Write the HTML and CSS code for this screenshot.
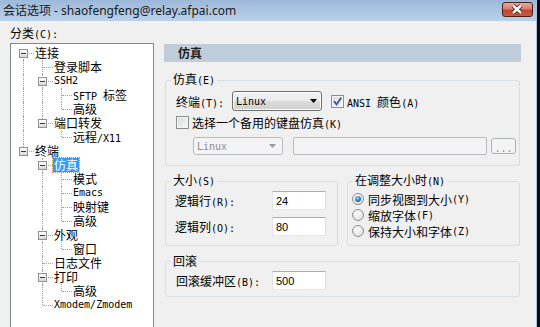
FILE: index.html
```html
<!DOCTYPE html>
<html lang="zh-CN">
<head>
    <meta charset="UTF-8">
    <title>会话选项</title>
    <link rel="stylesheet" href="styles.css">
</head>
<body>
<div class="screen">
  <div class="dialog">
    <div class="titlebar">
      <span class="title">会话选项 - shaofengfeng@relay.afpai.com</span>
      <button class="close">
        <svg width="29" height="13" viewBox="0 0 29 13">
          <path d="M10 2.5l8 7.5M18 2.5l-8 7.5" stroke="#3b1713" stroke-width="4.2" fill="none"/>
          <path d="M10 2.5l8 7.5M18 2.5l-8 7.5" stroke="#fff" stroke-width="2.4" fill="none"/>
        </svg>
      </button>
    </div>

    <div class="main">
      <!-- Kategorien -->
      <div class="side">
        <div class="cap">分类<span class="k">(C):</span></div>
        <div class="tree">
          <div class="node"><i class="c f"><b class="box"></b></i><span class="lbl">连接</span></div>
          <div class="node"><i class="c v"></i><i class="c t"></i><span class="lbl">登录脚本</span></div>
          <div class="node"><i class="c v"></i><i class="c t"><b class="box"></b></i><span class="lbl k">SSH2</span></div>
          <div class="node"><i class="c v"></i><i class="c v"></i><i class="c t"></i><span class="lbl"><span class="k">SFTP </span>标签</span></div>
          <div class="node"><i class="c v"></i><i class="c v"></i><i class="c l"></i><span class="lbl">高级</span></div>
          <div class="node"><i class="c v"></i><i class="c l"><b class="box"></b></i><span class="lbl">端口转发</span></div>
          <div class="node"><i class="c v"></i><i class="c"></i><i class="c l"></i><span class="lbl">远程<span class="k">/X11</span></span></div>
          <div class="node"><i class="c l"><b class="box"></b></i><span class="lbl">终端</span></div>
          <div class="node"><i class="c"></i><i class="c t"><b class="box"></b></i><span class="lbl sel">仿真</span></div>
          <div class="node"><i class="c"></i><i class="c v"></i><i class="c t"></i><span class="lbl">模式</span></div>
          <div class="node"><i class="c"></i><i class="c v"></i><i class="c t"></i><span class="lbl k">Emacs</span></div>
          <div class="node"><i class="c"></i><i class="c v"></i><i class="c t"></i><span class="lbl">映射键</span></div>
          <div class="node"><i class="c"></i><i class="c v"></i><i class="c l"></i><span class="lbl">高级</span></div>
          <div class="node"><i class="c"></i><i class="c t"><b class="box"></b></i><span class="lbl">外观</span></div>
          <div class="node"><i class="c"></i><i class="c v"></i><i class="c l"></i><span class="lbl">窗口</span></div>
          <div class="node"><i class="c"></i><i class="c t"></i><span class="lbl">日志文件</span></div>
          <div class="node"><i class="c"></i><i class="c t"><b class="box"></b></i><span class="lbl">打印</span></div>
          <div class="node"><i class="c"></i><i class="c v"></i><i class="c l"></i><span class="lbl">高级</span></div>
          <div class="node"><i class="c"></i><i class="c l"></i><span class="lbl k">Xmodem/Zmodem</span></div>
        </div>
      </div>

      <!-- Seite: Emulation -->
      <div class="panel">
        <div class="head">仿真</div>

        <fieldset class="grp g-emu">
          <legend>仿真<span class="k">(E)</span></legend>
          <div class="in">
            <div class="line r1">
              <span class="lab w-term">终端<span class="k">(T):</span></span>
              <div class="combo"><span class="k">Linux</span><svg class="arr" width="7" height="4"><path d="M0 0h7L3.5 4z"/></svg></div>
              <span class="chk on"><svg width="11" height="11" viewBox="0 0 11 11"><path d="M2 5.2l2.6 3.3L9.2 1.6"/></svg></span>
              <span class="ctext"><span class="k">ANSI </span>颜色<span class="k">(A)</span></span>
            </div>
            <div class="line r2">
              <span class="chk"></span>
              <span class="ctext">选择一个备用的键盘仿真<span class="k">(K)</span></span>
            </div>
            <div class="line r3">
              <div class="combo off"><span class="k">Linux</span><svg class="arr" width="7" height="4"><path d="M0 0h7L3.5 4z"/></svg></div>
              <div class="field off"></div>
              <div class="dots"><span class="k">...</span></div>
            </div>
          </div>
        </fieldset>

        <div class="pair">
          <fieldset class="grp g-size">
            <legend>大小<span class="k">(S)</span></legend>
            <div class="in">
              <div class="line r-in">
                <span class="lab w-size">逻辑行<span class="k">(R):</span></span>
                <input class="num" type="text" value="24">
              </div>
              <div class="line r-in gap">
                <span class="lab w-size">逻辑列<span class="k">(O):</span></span>
                <input class="num" type="text" value="80">
              </div>
            </div>
          </fieldset>
          <fieldset class="grp g-resize">
            <legend>在调整大小时<span class="k">(N)</span></legend>
            <div class="in">
              <div class="opt"><span class="rad on"></span>同步视图到大小<span class="k">(Y)</span></div>
              <div class="opt"><span class="rad"></span>缩放字体<span class="k">(F)</span></div>
              <div class="opt"><span class="rad"></span>保持大小和字体<span class="k">(Z)</span></div>
            </div>
          </fieldset>
        </div>

        <fieldset class="grp g-scroll">
          <legend>回滚</legend>
          <div class="in">
            <div class="line r-in">
              <span class="lab w-scroll">回滚缓冲区<span class="k">(B):</span></span>
              <input class="num" type="text" value="500">
            </div>
          </div>
        </fieldset>
      </div>
    </div>
  </div>
  <div class="edge"></div>
</div>
</body>
</html>
```

FILE: styles.css
```css
body {
  margin: 0;
  background: #000;
  font-family: "Noto Sans CJK SC", sans-serif;
  font-size: 12px;
  color: #000;
}
.screen {
  display: flex;
  width: 540px;
  height: 327px;
  overflow: hidden;
}
.dialog {
  width: 536px;
  background: #f0f0f0;
  display: flex;
  flex-direction: column;
}
.edge {
  width: 3px;
  border-left: 1px solid #a9c4e2;
  background: #060b14;
}
.k {
  font-family: "DejaVu Sans Mono", monospace;
  font-size: 10px;
}

/* Titelleiste */
.titlebar {
  height: 21px;
  flex: none;
  display: flex;
  justify-content: space-between;
  align-items: flex-start;
  background: linear-gradient(#9db9d9, #bad1ea);
}
.title {
  padding-left: 3px;
  line-height: 21px;
  font-family: "Noto Sans", "Noto Sans CJK SC", sans-serif;
  font-size: 12px;
  color: #1b1b1b;
}
.close {
  margin: 2px 3px 0 0;
  width: 31px;
  height: 15px;
  padding: 0;
  border: 1px solid #4a211b;
  border-radius: 3px;
  background: linear-gradient(#e9ab9c, #d78070 45%, #c2442f 55%, #cc5a42);
  display: flex;
}
.close svg { display: block; }

.main {
  flex: 1;
  display: flex;
  min-height: 0;
}

/* Baum links */
.side {
  width: 144px;
  margin-left: 10px;
  padding-top: 5px;
  display: flex;
  flex-direction: column;
}
.cap {
  height: 14px;
  line-height: 14px;
}
.tree {
  flex: 1;
  margin-top: 3px;
  background: #fff;
  border: 1px solid #828790;
  border-bottom: none;
  padding: 2px 0 0 3px;
}
.node {
  display: flex;
  height: 14px;
  line-height: 14px;
}
.c {
  position: relative;
  width: 19px;
  height: 14px;
  flex: none;
}
.v::before, .t::before, .l::before, .f::before {
  content: "";
  position: absolute;
  left: 9px;
  top: 0;
  bottom: 0;
  border-left: 1px dotted #a0a0a0;
}
.l::before { bottom: 7px; }
.f::before { top: 7px; }
.t::after, .l::after, .f::after {
  content: "";
  position: absolute;
  left: 10px;
  right: -1px;
  top: 7px;
  border-top: 1px dotted #a0a0a0;
}
.box {
  position: absolute;
  left: 5px;
  top: 3px;
  width: 9px;
  height: 9px;
  box-sizing: border-box;
  border: 1px solid #919191;
  background: linear-gradient(#fff, #d8d8d8);
  z-index: 1;
}
.box::after {
  content: "";
  position: absolute;
  left: 1px;
  top: 3px;
  width: 5px;
  height: 1px;
  background: #1f3d77;
}
.lbl {
  margin-left: 1px;
  padding: 0 1px;
  white-space: nowrap;
}
.lbl.k { font-size: 10px; }
.sel {
  background: #3399ff;
  color: #fff;
  outline: 1px dotted #d88a3c;
}

/* Seite rechts */
.panel {
  width: 357px;
  margin-left: 10px;
  padding-top: 23px;
}
.head {
  height: 18px;
  line-height: 18px;
  padding-left: 14px;
  background: #c0cedb;
  font-weight: bold;
  color: #222;
}
.grp {
  box-sizing: border-box;
  margin: 0 0 0 1px;
  padding: 0;
  min-width: 0;
  border: 1px solid #d5dfe5;
  border-radius: 3px;
}
.grp legend {
  margin-left: 5px;
  padding: 0 2px;
  line-height: 14px;
}
.g-emu { width: 355px; margin-top: 10px; }
.g-emu .in { padding: 3px 0 10px 10px; }
.pair {
  display: flex;
  gap: 9px;
  width: 355px;
  margin: 7px 0 0 1px;
}
.pair .grp { width: 173px; margin: 0; }
.g-size .in { padding: 2px 0 9px 9px; }
.g-resize .in { padding: 2px 0 6px 4px; }
.g-scroll { width: 355px; margin-top: 8px; }
.g-scroll .in { padding: 3px 0 6px 10px; }

.line {
  display: flex;
  align-items: center;
  white-space: nowrap;
}
.r1 { height: 20px; }
.r2 { height: 16px; margin-top: 3px; }
.r3 { height: 18px; margin-top: 7px; padding-left: 17px; }
.r-in { height: 19px; }
.r-in.gap { margin-top: 7px; }
.lab { flex: none; }
.w-term { width: 56px; }
.w-size { width: 97px; }
.w-scroll { width: 96px; }

.combo {
  box-sizing: border-box;
  width: 90px;
  height: 20px;
  display: flex;
  align-items: center;
  justify-content: space-between;
  padding: 0 4px 0 3px;
  border: 1px solid #707070;
  border-radius: 3px;
  background: linear-gradient(#f3f3f3, #ebebeb 50%, #dddddd 50%, #cfcfcf);
  box-shadow: inset 0 0 0 1px #fbfbfb;
}
.combo .arr { fill: #000; }
.combo.off {
  height: 18px;
  padding-right: 6px;
  border-color: #b8bcc0;
  background: #f4f4f4;
  box-shadow: none;
  color: #8d8d8d;
}
.combo.off .arr { fill: #9a9a9a; }
.field {
  box-sizing: border-box;
  width: 194px;
  height: 18px;
  margin-left: 10px;
  border: 1px solid #b8bcc0;
  border-radius: 2px;
  background: #f4f4f4;
}
.dots {
  box-sizing: border-box;
  width: 25px;
  height: 16px;
  margin-left: 4px;
  border: 1px solid #adb2b5;
  border-radius: 3px;
  background: #f4f4f4;
  color: #8d8d8d;
  text-align: center;
  line-height: 16px;
}

.chk {
  box-sizing: border-box;
  flex: none;
  width: 13px;
  height: 13px;
  border: 1px solid #8e8f8f;
  background: linear-gradient(135deg, #d6d8da, #fbfbfb);
  box-shadow: inset 0 0 0 1px #f6f6f6;
}
.r1 .chk { margin-left: 9px; }
.chk svg { display: block; }
.chk path {
  fill: none;
  stroke: #3f5d9c;
  stroke-width: 1.9;
}
.ctext { margin-left: 3px; }

.num {
  box-sizing: border-box;
  width: 54px;
  height: 19px;
  margin: 0;
  padding: 0 3px;
  border: 1px solid;
  border-color: #abadb3 #dbdfe6 #e3e9ef #e2e3ea;
  background: #fff;
  font-family: "Liberation Sans", Arial, sans-serif;
  font-size: 11px;
  color: #000;
}

.opt {
  display: flex;
  align-items: center;
  height: 16px;
  white-space: nowrap;
}
.rad {
  position: relative;
  box-sizing: border-box;
  flex: none;
  width: 12px;
  height: 12px;
  margin-right: 4px;
  border: 1px solid #8e8f8f;
  border-radius: 50%;
  background: radial-gradient(circle at 40% 35%, #fdfdfd, #d6d8da);
}
.rad.on::after {
  content: "";
  position: absolute;
  left: 2px;
  top: 2px;
  width: 6px;
  height: 6px;
  border-radius: 50%;
  background: radial-gradient(circle at 40% 35%, #9fd6f5, #2b78b4 55%, #134a76);
}
```
